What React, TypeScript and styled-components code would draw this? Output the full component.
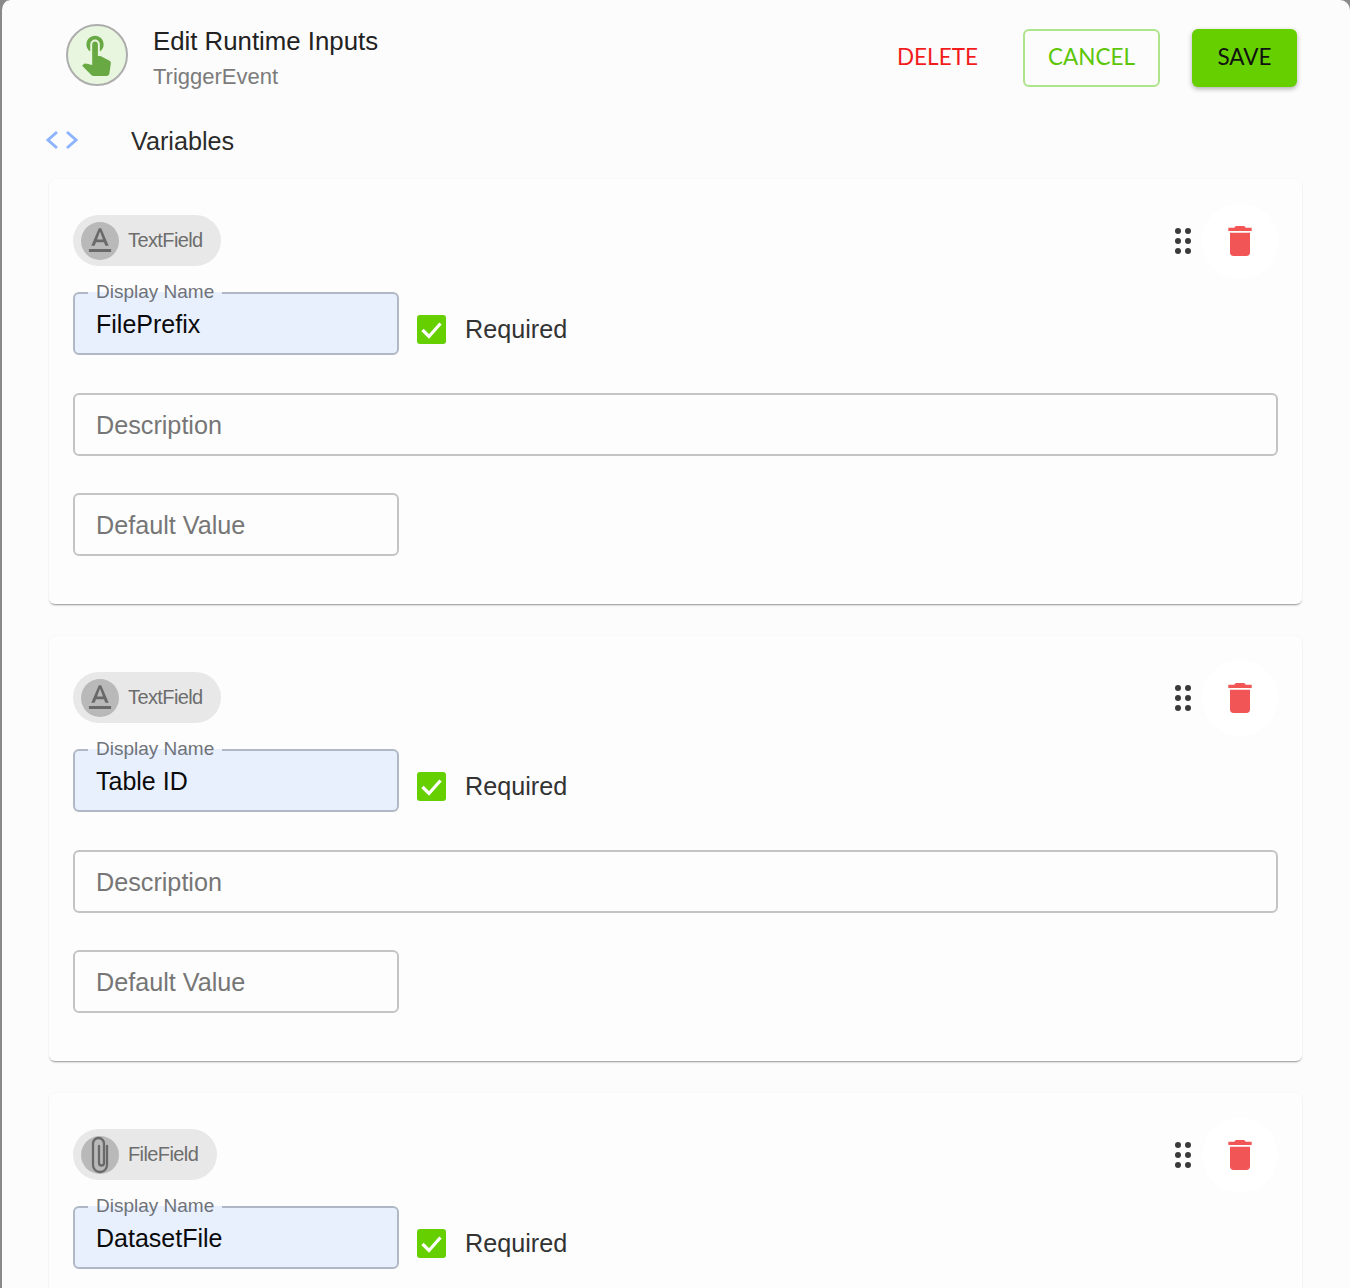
import React from "react";
import styled, { createGlobalStyle } from "styled-components";
import { MdDelete, MdTextFormat, MdTouchApp } from "react-icons/md";

const Global = createGlobalStyle`
  html, body { margin: 0; padding: 0; background: #8a8a8a; }
  * { box-sizing: border-box; }
`;

const Page = styled.div`
  height: 1288px;
  overflow: hidden;
  background: #fcfcfc;
  border-left: 2px solid #8a8a8a;
  border-top-left-radius: 10px;
  border-top-right-radius: 10px;
  padding: 0 48px 0 47px;
  font-family: "Liberation Sans", Arial, sans-serif;
`;

const Header = styled.header`
  display: flex;
  align-items: flex-start;
  height: 123px;
  padding: 24px 5px 0 17px;
`;

const AppIcon = styled.div`
  width: 62px;
  height: 62px;
  flex: none;
  border-radius: 50%;
  background: #e8f6e0;
  border: 2px solid #adadad;
  color: #69a944;
  display: flex;
  align-items: center;
  justify-content: center;
  font-size: 46px;
  svg { margin: -4px 2px 0 0; }
`;

const Titles = styled.div`
  margin-left: 25px;
  flex: 1;
`;

const Title = styled.div`
  font-size: 25.8px;
  line-height: 34px;
  color: #222;
`;

const Subtitle = styled.div`
  font-size: 22px;
  line-height: 30px;
  margin-top: 4px;
  color: #7b7b7b;
`;

const Actions = styled.div`
  display: flex;
  align-items: center;
  margin-top: 5px;
`;

const Button = styled.button<{ $kind: "text" | "outline" | "solid" }>`
  height: 58px;
  border-radius: 6px;
  font-family: Lato, "Liberation Sans", sans-serif;
  font-size: 22.5px;
  padding: 0 0 3px;
  cursor: pointer;
  background: ${(p) => (p.$kind === "solid" ? "#66cf00" : "transparent")};
  color: ${(p) => (p.$kind === "solid" ? "#111" : p.$kind === "outline" ? "#5ec60a" : "#f21c1c")};
  border: ${(p) => (p.$kind === "outline" ? "2px solid #aee48c" : "0")};
  box-shadow: ${(p) => (p.$kind === "solid" ? "0 2px 5px rgba(0,0,0,.3)" : "none")};
  width: ${(p) => (p.$kind === "solid" ? "105px" : p.$kind === "outline" ? "137px" : "80px")};
  margin-left: ${(p) => (p.$kind === "solid" ? "32px" : p.$kind === "outline" ? "46px" : "0")};
`;

const SectionTitle = styled.div`
  display: flex;
  align-items: center;
  height: 36px;
  margin-left: -4px;
  margin-bottom: 20px;
  font-size: 25.2px;
  color: #2b2b2b;
  svg { width: 34px; height: 22px; margin-right: 52px; flex: none; margin-top: -2px; }
`;

const Card = styled.section`
  height: 425px;
  flex: none;
  margin-bottom: 32px;
  padding: 24px 24px 0;
  background: #fdfdfd;
  border-radius: 6px;
  box-shadow: 0 2px 2px -1px rgba(0, 0, 0, 0.42), 0 0 2px rgba(0, 0, 0, 0.05);
`;

const CardTop = styled.div`
  display: flex;
  align-items: center;
  height: 76px;
  margin-bottom: 13px;
`;

const Chip = styled.div`
  display: flex;
  align-items: center;
  height: 51px;
  margin-top: -1px;
  padding: 0 18.5px 0 8px;
  border-radius: 26px;
  background: #e8e8e8;
  color: #6d6d6d;
  font-size: 20px;
  letter-spacing: -0.6px;
`;

const ChipAvatar = styled.span`
  width: 38px;
  height: 38px;
  border-radius: 50%;
  background: #b9b9b9;
  color: #696969;
  display: flex;
  align-items: center;
  justify-content: center;
  margin-right: 9px;
  font-size: 40px;
`;

const CardTools = styled.div`
  margin-left: auto;
  display: flex;
  align-items: center;
`;

const Dots = styled.svg`
  width: 16px;
  height: 26px;
  margin-right: 11px;
  fill: #3a3a3a;
`;

const TrashButton = styled.button`
  width: 76px;
  height: 76px;
  border-radius: 50%;
  border: 0;
  padding: 0;
  background: #fff;
  color: #f25555;
  font-size: 40px;
  display: flex;
  align-items: center;
  justify-content: center;
`;

const Row = styled.div`
  display: flex;
  align-items: center;
`;

const Field = styled.div<{ $wide?: boolean; $top?: number }>`
  position: relative;
  width: ${(p) => (p.$wide ? "100%" : "326px")};
  height: 63px;
  flex: none;
  margin-top: ${(p) => p.$top ?? 0}px;
`;

const Input = styled.input<{ $filled?: boolean }>`
  width: 100%;
  height: 100%;
  padding: 2px 21px 0;
  border-radius: 6px;
  outline: none;
  font-family: "Liberation Sans", Arial, sans-serif;
  font-size: ${(p) => (p.$filled ? "25px" : "25.2px")};
  color: #0a0a0a;
  background: ${(p) => (p.$filled ? "#e8f0fe" : "#fdfdfd")};
  border: 2px solid ${(p) => (p.$filled ? "#b0b8c6" : "#c4c4c4")};
  &::placeholder { color: #767676; opacity: 1; }
`;

const FloatLabel = styled.label`
  position: absolute;
  left: 15px;
  top: -11px;
  padding: 0 8px;
  font-size: 19px;
  line-height: 22px;
  color: #6f7379;
  background: linear-gradient(#fdfdfd 50%, #e8f0fe 50%);
`;

const CheckWrap = styled.label`
  display: flex;
  align-items: center;
  margin: 12px 0 0 18px;
  font-size: 25.2px;
  color: #333;
`;

const CheckBox = styled.span`
  width: 29px;
  height: 29px;
  border-radius: 3px;
  background: #66cf00;
  display: flex;
  align-items: center;
  justify-content: center;
  margin-right: 19px;
`;

const DotsIcon = () => (
  <Dots viewBox="0 0 16 26">
    {[3, 13, 23].flatMap((y) => [3, 13].map((x) => <circle key={`${x}-${y}`} cx={x} cy={y} r="3" />))}
  </Dots>
);

const PaperclipIcon = () => (
  <svg width="24" height="38" viewBox="0 0 24 38" fill="none" stroke="#696969" strokeWidth="2.3" strokeLinecap="round">
    <path d="M19 10v19a7 7 0 0 1-14 0V7.5a5.5 5.5 0 0 1 11 0V27a2.5 2.5 0 0 1-5 0V10" />
  </svg>
);

type Variable = { kind: string; name: string; file?: boolean };

const variables: Variable[] = [
  { kind: "TextField", name: "FilePrefix" },
  { kind: "TextField", name: "Table ID" },
  { kind: "FileField", name: "DatasetFile", file: true },
];

export default function App() {
  return (
    <>
      <Global />
      <Page>
        <Header>
          <AppIcon>
            <MdTouchApp />
          </AppIcon>
          <Titles>
            <Title>Edit Runtime Inputs</Title>
            <Subtitle>TriggerEvent</Subtitle>
          </Titles>
          <Actions>
            <Button $kind="text">DELETE</Button>
            <Button $kind="outline">CANCEL</Button>
            <Button $kind="solid">SAVE</Button>
          </Actions>
        </Header>
        <SectionTitle>
          <svg viewBox="0 0 34 22" fill="none" stroke="#8fb4ff" strokeWidth="3">
            <path d="M12 3 3 11l9 8M22 3l9 8-9 8" />
          </svg>
          Variables
        </SectionTitle>
        {variables.map((v) => (
          <Card key={v.name}>
            <CardTop>
              <Chip>
                <ChipAvatar>{v.file ? <PaperclipIcon /> : <MdTextFormat />}</ChipAvatar>
                {v.kind}
              </Chip>
              <CardTools>
                <DotsIcon />
                <TrashButton aria-label="Delete variable">
                  <MdDelete />
                </TrashButton>
              </CardTools>
            </CardTop>
            <Row>
              <Field>
                <FloatLabel>Display Name</FloatLabel>
                <Input $filled readOnly value={v.name} />
              </Field>
              <CheckWrap>
                <CheckBox>
                  <svg width="23" height="18" viewBox="0 0 23 18" fill="none" stroke="#fff" strokeWidth="3.2">
                    <path d="M2.5 9l6.5 6.5L20.5 2.5" />
                  </svg>
                </CheckBox>
                Required
              </CheckWrap>
            </Row>
            <Field $wide $top={38}>
              <Input placeholder="Description" readOnly />
            </Field>
            <Field $top={37}>
              <Input placeholder="Default Value" readOnly />
            </Field>
          </Card>
        ))}
      </Page>
    </>
  );
}
